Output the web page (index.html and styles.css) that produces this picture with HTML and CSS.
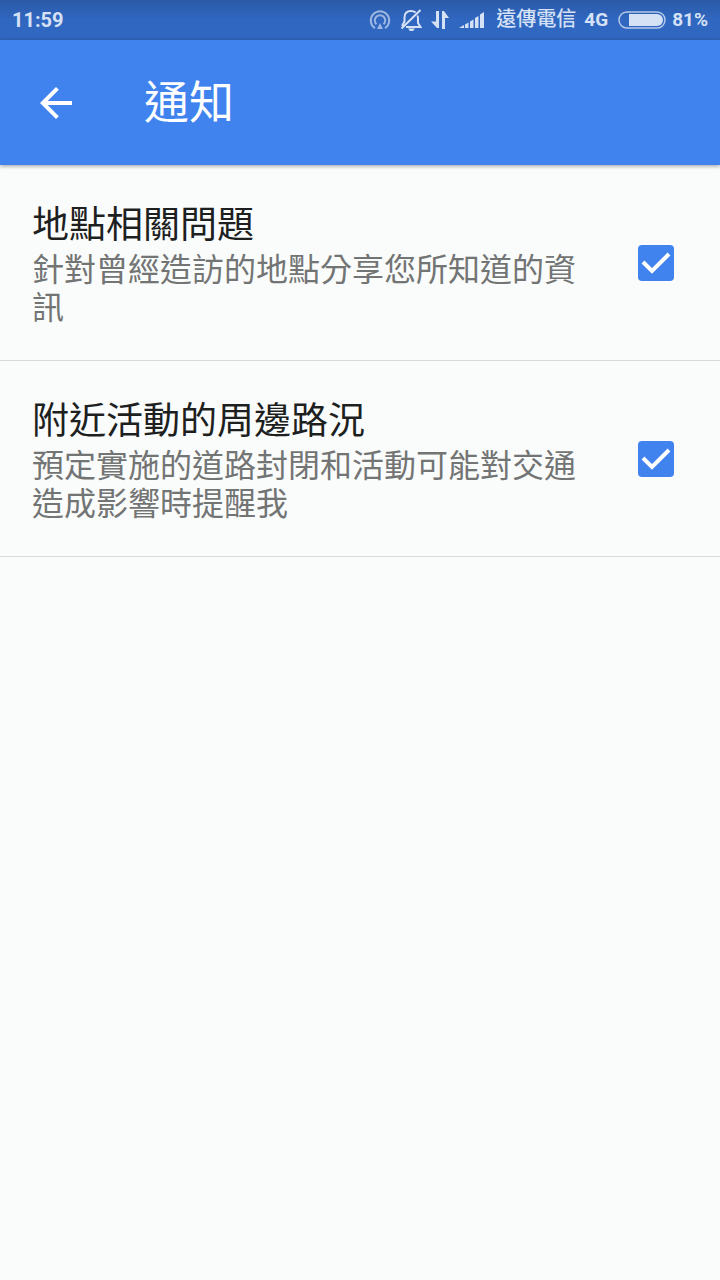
FILE: index.html
```html
<!DOCTYPE html>
<html lang="zh-Hant">
<head>
    <meta charset="UTF-8">
    <meta name="viewport" content="width=device-width, initial-scale=1.0">
    <title>通知</title>
    <link rel="stylesheet" href="styles.css">
</head>
<body>

    <div class="status-bar">
        <span class="time">11:59</span>
        <div class="status-icons">
            <svg class="icon-hotspot" width="22" height="22" viewBox="0 0 22 22" fill="none" stroke="currentColor" stroke-width="2">
                <path d="M6 19.2a9.200 9.200 0 1 1 10 0"/>
                <path d="M7.400 15.200a5.200 5.200 0 1 1 7.200 0"/>
                <path d="M11 14l3 6H8z" fill="currentColor" stroke="none"/>
            </svg>
            <svg class="icon-mute" width="22" height="24" viewBox="0 0 22 24" fill="none" stroke="currentColor" stroke-width="2">
                <path d="M4.500 14V9.500C4.500 5.500 7 3 11 3c2 0 3.500.6 4.700 1.600M17.500 7.500c.4 1 .5 2 .5 3V15l2.500 4H6"/>
                <path d="M1.500 20.500L20.500 2M4.500 13.500L2 18"/>
                <path d="M8 20.500h7L13 23h-3z" fill="currentColor" stroke="none"/>
            </svg>
            <svg class="icon-data" width="18" height="20" viewBox="0 0 18 20" fill="currentColor">
                <path d="M5 1h3v17H6l-6-6.500h5zM11 19h3V8h4l-5-7h-2z"/>
            </svg>
            <svg class="icon-signal" width="26" height="20" viewBox="0 0 26 20" fill="currentColor">
                <path d="M0 18l5-3v3zM6 14.500l3.500-2V18H6zM11 11.500l3.500-2V18H11zM16 8l3.500-2v12H16zM21 4.500L25 2v16h-4z"/>
            </svg>
            <span class="carrier">遠傳電信</span>
            <span class="network">4G</span>
            <svg class="icon-battery" width="48" height="18" viewBox="0 0 48 18">
                <rect x="1" y="1" width="46" height="16" rx="8" fill="none" stroke="currentColor" stroke-opacity="0.8" stroke-width="1.500"/>
                <path d="M11 3h28a6 6 0 0 1 0 12H11z" fill="currentColor"/>
            </svg>
            <span class="percent">81%</span>
        </div>
    </div>

    <header class="toolbar">
        <button class="back-button" type="button" aria-label="返回">
            <svg width="48" height="48" viewBox="0 0 24 24" fill="currentColor">
                <path d="M20 11H7.830l5.590-5.590L12 4l-8 8 8 8 1.410-1.410L7.830 13H20v-2z"/>
            </svg>
        </button>
        <h1>通知</h1>
    </header>

    <main class="settings">
        <label class="setting">
            <span class="setting-text">
                <span class="setting-title">地點相關問題</span>
                <span class="setting-desc">針對曾經造訪的地點分享您所知道的資訊</span>
            </span>
            <span class="checkbox">
                <input type="checkbox" checked>
                <svg viewBox="0 0 36 36" fill="none" stroke="currentColor" stroke-width="4">
                    <path d="M5 17l9 9L31 9"/>
                </svg>
            </span>
        </label>
        <label class="setting">
            <span class="setting-text">
                <span class="setting-title">附近活動的周邊路況</span>
                <span class="setting-desc">預定實施的道路封閉和活動可能對交通造成影響時提醒我</span>
            </span>
            <span class="checkbox">
                <input type="checkbox" checked>
                <svg viewBox="0 0 36 36" fill="none" stroke="currentColor" stroke-width="4">
                    <path d="M5 17l9 9L31 9"/>
                </svg>
            </span>
        </label>
    </main>

</body>
</html>
```
FILE: styles.css
```css
* {
    box-sizing: border-box;
}

body {
    margin: 0;
    min-height: 100vh;
    background-color: #fafcfc;
    font-family: Roboto, "Noto Sans CJK TC", sans-serif;
}

/* status bar */
.status-bar {
    display: flex;
    justify-content: space-between;
    align-items: center;
    height: 40px;
    padding: 0 12px;
    background: linear-gradient(#2b5aa8, #3067c0 50%, #3067c0);
    color: #d5e1f5;
    font-size: 20px;
    font-weight: 500;
    line-height: 24px;
}

.network,
.percent {
    font-size: 19px;
    font-weight: 700;
}

.time {
    font-weight: 700;
}

.status-icons {
    display: flex;
    align-items: center;
}

.icon-hotspot {
    margin-right: 9px;
    opacity: 0.65;
}

.icon-mute {
    margin-right: 9px;
}

.icon-data {
    margin-right: 10px;
}

.icon-signal {
    margin-right: 11px;
}

.carrier {
    margin-right: 8px;
    padding-bottom: 2px;
}

.network {
    margin-right: 10px;
}

.icon-battery {
    margin-right: 6px;
}

/* toolbar */
.toolbar {
    display: flex;
    align-items: center;
    position: relative;
    height: 125px;
    padding: 0 32px;
    background-color: #4083ef;
    color: #fff;
    box-shadow: 0 1px 4px rgba(0, 0, 0, 0.4);
}

.back-button {
    display: flex;
    padding: 0;
    border: 0;
    background: none;
    color: inherit;
    cursor: pointer;
}

.toolbar h1 {
    margin: 0 0 0 64px;
    padding-top: 2px;
    font-size: 45px;
    font-weight: 400;
    line-height: 64px;
}

/* settings list */
.setting {
    display: flex;
    align-items: center;
    justify-content: space-between;
    padding: 0 46px 0 32px;
    border-bottom: 1px solid #d8dada;
    cursor: pointer;
}

.setting-text {
    flex: 1;
    margin-right: 48px;
    padding: 39px 0 33px;
}

.setting-title,
.setting-desc {
    display: block;
}

.setting-title {
    margin-bottom: 3px;
    color: #1e1f1f;
    font-size: 37px;
    line-height: 44px;
}

.setting-desc {
    color: #737474;
    font-size: 32px;
    line-height: 38px;
}

.checkbox {
    position: relative;
    width: 36px;
    height: 36px;
    color: #fff;
}

.checkbox input {
    display: block;
    width: 36px;
    height: 36px;
    margin: 0;
    appearance: none;
    border: 4px solid #737474;
    border-radius: 4px;
}

.checkbox input:checked {
    border-color: #4083ef;
    background-color: #4083ef;
}

.checkbox svg {
    position: absolute;
    inset: 0;
    pointer-events: none;
    visibility: hidden;
}

.checkbox input:checked + svg {
    visibility: visible;
}
```
